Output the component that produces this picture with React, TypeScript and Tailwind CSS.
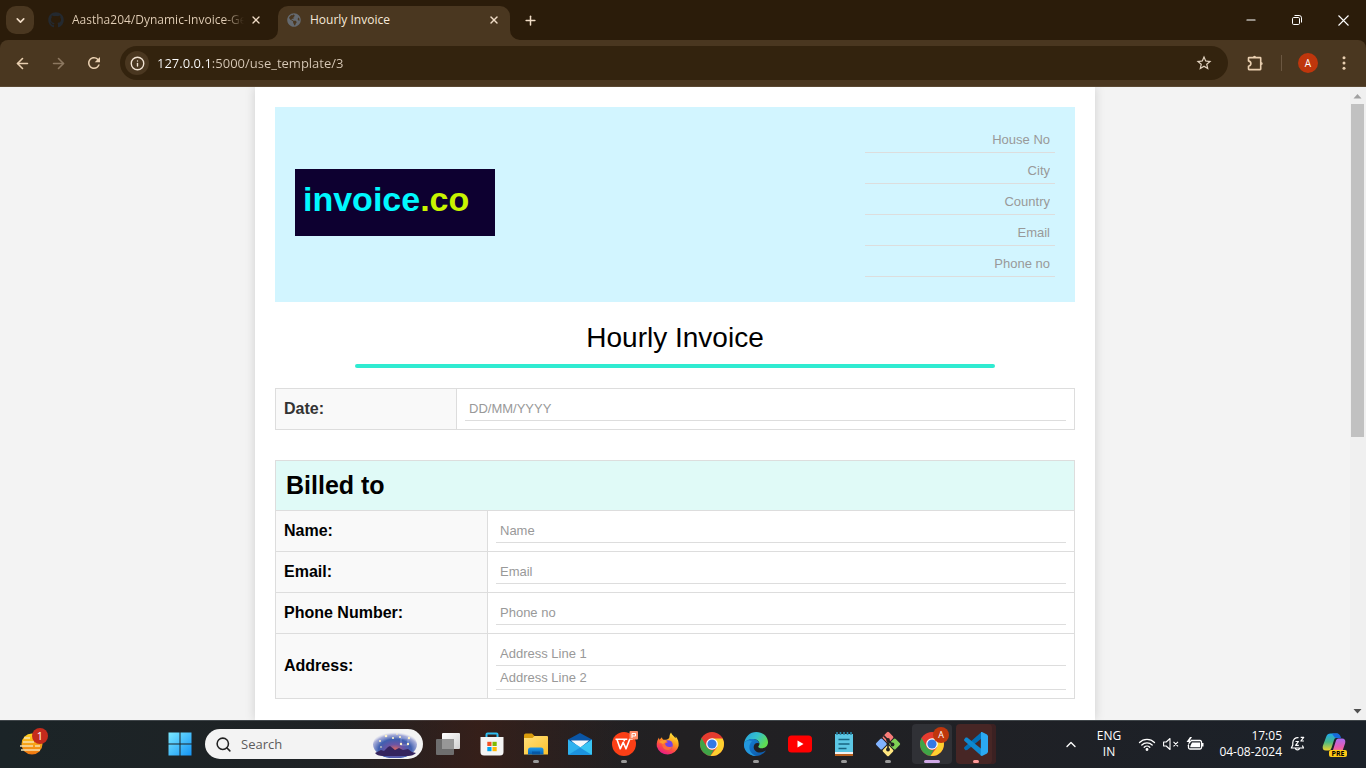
import React from "react";
import type { ReactNode } from "react";
import { ArrowLeft, ArrowRight, ChevronDown, ChevronUp, Info, Minus, Plus, Search, X } from "lucide-react";
import { FaGithub, FaGlobeAmericas } from "react-icons/fa";
import { MdRefresh, MdStarBorder } from "react-icons/md";

const UI_FONT = "font-['Open_Sans','Noto_Sans',sans-serif]";

function Flare({ side }: { side: "left" | "right" }) {
  return (
    <svg
      aria-hidden="true"
      viewBox="0 0 10 10"
      className={side === "left" ? "absolute -left-[10px] bottom-0 size-[10px]" : "absolute -right-[10px] bottom-0 size-[10px] -scale-x-100"}
    >
      <path d="M10 0v10H0A10 10 0 0 0 10 0Z" fill="#4a3720" />
    </svg>
  );
}

function TitleBar() {
  return (
    <header className="flex h-10 shrink-0 items-stretch bg-[#2b1c0a] text-[#f0dcc6]">
      <button aria-label="Search tabs" className="mt-[6px] ml-[6px] flex size-7 shrink-0 items-center justify-center rounded-[10px] bg-[#4a3720]">
        <ChevronDown size={13} strokeWidth={3} />
      </button>
      <div className="mt-[6px] ml-[14px] flex h-7 w-[216px] shrink-0 items-center">
        <FaGithub size={16} color="#24292f" className="shrink-0" />
        <span className="ml-2 w-44 shrink-0 bg-linear-to-r from-[#e4d0b8] from-[152px] to-transparent to-[172px] bg-clip-text text-[12px] leading-4 whitespace-nowrap text-transparent">
          Aastha204/Dynamic-Invoice-Ge
        </span>
        <button aria-label="Close tab" className="flex size-4 shrink-0 items-center justify-center">
          <X size={12} strokeWidth={2.6} />
        </button>
      </div>
      <div className="relative mt-[6px] ml-[14px] flex w-[232px] shrink-0 items-center rounded-t-[10px] bg-[#4a3720] pr-2 pb-[6px] pl-[9px]">
        <Flare side="left" />
        <Flare side="right" />
        <FaGlobeAmericas size={14} color="#656a70" />
        <span className="ml-[9px] text-[12px] leading-4 text-[#f7e9d8]">Hourly Invoice</span>
        <button aria-label="Close tab" className="ml-auto flex size-4 items-center justify-center">
          <X size={12} strokeWidth={2.8} />
        </button>
      </div>
      <button aria-label="New tab" className="ml-[6px] flex w-7 items-center justify-center">
        <Plus size={15} strokeWidth={2.4} />
      </button>
      <div className="ml-auto flex text-white">
        <button aria-label="Minimise" className="flex w-[46px] items-center justify-center">
          <Minus size={14} strokeWidth={1.8} />
        </button>
        <button aria-label="Restore" className="flex w-[46px] items-center justify-center">
          <svg width="10" height="10" viewBox="0 0 10 10" fill="none" stroke="currentColor">
            <rect x=".5" y="2.5" width="7" height="7" rx="1.2" />
            <path d="M2.5 .5h4.600a2.400 2.400 0 0 1 2.400 2.400v4.600" />
          </svg>
        </button>
        <button aria-label="Close" className="flex w-[46px] items-center justify-center">
          <svg width="11" height="11" viewBox="0 0 11 11" stroke="currentColor" strokeWidth="1.1">
            <path d="M.5.5l10 10M10.500.5l-10 10" />
          </svg>
        </button>
      </div>
    </header>
  );
}

function Toolbar() {
  return (
    <div className="bg-[#2b1c0a]">
      <nav aria-label="Browser" className="flex h-[47px] items-center rounded-t-[8px] border-b border-[#5a4832] bg-[#4a3720] pl-2 text-[#e9cfb0]">
        <div className="flex gap-2">
          <button aria-label="Back" className="flex size-7 items-center justify-center"><ArrowLeft size={17} strokeWidth={2.3} /></button>
          <button aria-label="Forward" className="flex size-7 items-center justify-center text-[#8d7860]"><ArrowRight size={17} strokeWidth={2.3} /></button>
          <button aria-label="Reload" className="flex size-7 items-center justify-center"><MdRefresh size={18} /></button>
        </div>
        <div className="ml-3 flex h-[34px] min-w-0 flex-1 items-center rounded-full bg-[#33230e] px-[5px]">
          <button aria-label="Site information" className="flex size-6 shrink-0 items-center justify-center rounded-full bg-[#4a3720] text-[#f0e2d2]">
            <Info size={15} strokeWidth={2.2} />
          </button>
          <input
            aria-label="Address"
            defaultValue="127.0.0.1:5000/use_template/3"
            className="ml-2 min-w-0 flex-1 bg-linear-to-r from-white from-[54px] to-[#d9cab8] to-[54px] bg-clip-text text-[13px] leading-5 text-transparent outline-none"
          />
          <button aria-label="Bookmark" className="mr-[10px] flex size-[18px] shrink-0 items-center justify-center text-[#e3d3c0]">
            <MdStarBorder size={18} />
          </button>
        </div>
        <button aria-label="Extensions" className="ml-[17px] flex size-5 items-center justify-center">
          <svg width="18" height="18" viewBox="0 0 18 18" fill="none" stroke="currentColor" strokeWidth="1.600" strokeLinejoin="round">
            <path d="M3 3.600h11.200q.5 0 .5.500v11q0 .5-.5.500H3q-.5 0-.5-.5v-2.800q2.400-.5 2.400-2.700T2.500 6.900V4.100q0-.5.5-.5Z" />
            <path d="M7 3.200a1.500 1.500 0 0 1 3 0ZM15.100 7.900a1.600 1.600 0 0 1 0 3.200Z" fill="currentColor" stroke="none" />
          </svg>
        </button>
        <span className="ml-4 h-4 w-px bg-[#6b5741]" />
        <button aria-label="Profile" className="ml-4 flex size-5 items-center justify-center rounded-full bg-[#bf360c] text-[10px] leading-4 text-white">A</button>
        <button aria-label="Menu" className="mr-3 ml-4 flex size-5 items-center justify-center">
          <svg width="4" height="16" viewBox="0 0 4 16" fill="currentColor">
            <circle cx="2" cy="2.800" r="1.500" /><circle cx="2" cy="8" r="1.500" /><circle cx="2" cy="13.200" r="1.500" />
          </svg>
        </button>
      </nav>
    </div>
  );
}

const FIELD = "block w-full border-b border-[#ddd] text-[13px] leading-[15px] text-black outline-none placeholder:text-[#999]";

function HeaderField({ name }: { name: string }) {
  return <input aria-label={name} placeholder={name} className={`${FIELD} bg-transparent p-[5px] text-right`} />;
}

function Row({ label, fields, className }: { label: string; fields: string[]; className: string }) {
  const id = label.toLowerCase().replace(/\W+/g, "-");
  return (
    <tr className="border border-[#ddd]">
      <th scope="row" className={`${className} border border-[#ddd] bg-[#f9f9f9] p-2 text-left text-[16px] leading-[18px] font-bold`}>
        <label htmlFor={id}>{label}</label>
      </th>
      <td className="border border-[#ddd] p-2">
        {fields.map((f, i) => (
          <input key={f} id={i === 0 ? id : undefined} aria-label={i === 0 ? undefined : f} placeholder={f} className={`${FIELD} bg-white p-1`} />
        ))}
      </td>
    </tr>
  );
}

function InvoicePage() {
  return (
    <main className="mx-auto min-h-full w-full max-w-[840px] bg-white p-5 font-['Liberation_Sans',Arial,sans-serif] shadow-[0_0_10px_rgba(0,0,0,0.15)]">
      <section className="flex items-center justify-between bg-[#d2f5ff] p-5">
        <div className="pb-1">
          <div className="h-[67px] w-[200px] bg-[#0d0030] pt-[13px] pl-2 text-[34px] leading-[34px] font-bold text-[#00f8ff]">
            invoice<span className="text-[#c8f400]">.co</span>
          </div>
        </div>
        <div className="flex w-[190px] flex-col gap-[5px] pb-[5px]">
          {["House No", "City", "Country", "Email", "Phone no"].map((n) => <HeaderField key={n} name={n} />)}
        </div>
      </section>
      <h1 className="mt-5 text-center text-[28px] leading-8 text-black">Hourly Invoice</h1>
      <div className="mx-auto mt-[10px] mb-5 h-1 w-4/5 rounded-full bg-[#2febd1]" />
      <table className="mb-[30px] w-full table-fixed border-collapse">
        <tbody>
          <Row label="Date:" fields={["DD/MM/YYYY"]} className="w-[181px] text-[#333]" />
        </tbody>
      </table>
      <table className="w-full table-fixed border-collapse">
        <colgroup>
          <col className="w-[212px]" />
          <col />
        </colgroup>
        <thead>
          <tr>
            <th colSpan={2} className="border border-[#ddd] bg-[#e0faf7] p-[10px] text-left text-[25px] leading-[29px] font-bold text-black">Billed to</th>
          </tr>
        </thead>
        <tbody>
          <Row label="Name:" fields={["Name"]} className="text-black" />
          <Row label="Email:" fields={["Email"]} className="text-black" />
          <Row label="Phone Number:" fields={["Phone no"]} className="text-black" />
          <Row label="Address:" fields={["Address Line 1", "Address Line 2"]} className="text-black" />
        </tbody>
      </table>
    </main>
  );
}

function Scrollbar() {
  return (
    <div aria-hidden="true" className="flex w-4 shrink-0 flex-col items-center bg-[#f0f0f0] pr-[2px]">
      <svg className="h-[17px] w-[9px] shrink-0" viewBox="0 0 9 17" fill="#a0a0a0"><path d="M.5 11.500l4-4.500 4 4.500Z" /></svg>
      <div className="h-[333px] w-[13px] bg-[#c1c1c1]" />
      <svg className="mt-auto h-[17px] w-[9px] shrink-0" viewBox="0 0 9 17" fill="#505050"><path d="M.5 6l4 4.500 4-4.500Z" /></svg>
    </div>
  );
}

function ChromeLogo({ id }: { id: string }) {
  return (
    <svg width="24" height="24" viewBox="0 0 24 24">
      <defs><clipPath id={id}><circle cx="12" cy="12" r="12" /></clipPath></defs>
      <g clipPath={`url(#${id})`}>
        <rect width="24" height="24" fill="#e53b2f" />
        <path d="M1.600 6L6.800 15a6 6 0 0 0 7.200 2.700L10.400 24H0V6Z" fill="#3fa447" />
        <path d="M12 6.500h12V24H10.400L17.200 15Z" fill="#fdd02f" />
      </g>
      <circle cx="12" cy="12" r="5.800" fill="#fff" />
      <circle cx="12" cy="12" r="4.600" fill="#3478e5" />
    </svg>
  );
}

function TaskViewIcon() {
  return (
    <svg width="24" height="24" viewBox="0 0 24 24">
      <defs><linearGradient id="tv" x2="1" y2="1"><stop stopColor="#fff" /><stop offset="1" stopColor="#d0d0d0" /></linearGradient></defs>
      <rect x="6" y="1" width="18" height="16" rx="1" fill="url(#tv)" />
      <rect x="0" y="7" width="18" height="16" rx="1" fill="#6e6e6e" />
      <rect x="6" y="7" width="12" height="10" fill="#979797" />
    </svg>
  );
}

function StoreIcon() {
  return (
    <svg width="24" height="24" viewBox="0 0 24 24">
      <path d="M6.500 6V2.500a1 1 0 0 1 1-1h9a1 1 0 0 1 1 1V6" fill="none" stroke="#2ebdf0" strokeWidth="2" />
      <path d="M.5 5h23v15a3.500 3.500 0 0 1-3.500 3.500H4A3.500 3.500 0 0 1 .5 20Z" fill="#f4f4f4" />
      <path d="M7.300 9.800h4.200V14H7.300Z" fill="#f25022" /><path d="M12.500 9.800h4.200V14h-4.200Z" fill="#7fba00" />
      <path d="M7.300 15h4.200v4.200H7.300Z" fill="#00a4ef" /><path d="M12.500 15h4.200v4.200h-4.200Z" fill="#ffb900" />
    </svg>
  );
}

function FolderIcon() {
  return (
    <svg width="24" height="24" viewBox="0 0 24 24">
      <defs>
        <linearGradient id="fd" x2="1" y2="1"><stop stopColor="#ffe07a" /><stop offset="1" stopColor="#fdc12c" /></linearGradient>
        <linearGradient id="fb" y2="1" x2="0"><stop stopColor="#1f9bea" /><stop offset="1" stopColor="#0560b4" /></linearGradient>
      </defs>
      <path d="M0 3.200A1.700 1.700 0 0 1 1.700 1.500H8L10.500 4H22v4H0Z" fill="#d99b0b" />
      <path d="M0 6h8.500L10.500 4H23a1 1 0 0 1 1 1v17.500H0Z" fill="url(#fd)" />
      <path d="M4 22.500V18a2.500 2.500 0 0 1 2.500-2.500h10.500a2.500 2.500 0 0 1 2.500 2.500v4.500Z" fill="url(#fb)" />
      <path d="M8 19.500h8v3H8Z" fill="#0658a6" />
    </svg>
  );
}

function MailIcon() {
  return (
    <svg width="24" height="24" viewBox="0 0 24 24">
      <path d="M0 7.500L12 1l12 6.500V13H0Z" fill="#0a55a5" />
      <path d="M3 8.500h18L12 16Z" fill="#f5f8fb" />
      <path d="M0 7.500L13 15.500 23 23H1a1 1 0 0 1-1-1Z" fill="#2fb1ee" />
      <path d="M24 7.500L12 15.500 1 23h22a1 1 0 0 0 1-1Z" fill="#39c5f4" />
      <path d="M12 15.500L23.500 22.800l-.5.200H1l-.5-.2Z" fill="#1c93df" />
    </svg>
  );
}

function WpsIcon() {
  return (
    <svg width="26" height="26" viewBox="0 0 26 26" className="overflow-visible">
      <circle cx="13" cy="13" r="12" fill="#fb3f16" />
      <path d="M4.500 8.200h9.300l-.8 2M6 8.500l3.200 9.300 3-6.500 2.800 6.500 3.700-9.600h3M13.800 8.200h2.500" fill="none" stroke="#fff" strokeWidth="1.600" strokeLinejoin="round" />
      <rect x="18.500" y="0" width="8.500" height="8.500" rx="1" fill="#ff8a65" />
      <path d="M21 7V2.500h3.500v2.500h-3.500" fill="none" stroke="#fff" />
    </svg>
  );
}

function FirefoxIcon() {
  return (
    <svg width="24" height="24" viewBox="0 0 24 24">
      <defs>
        <linearGradient id="ff" x1=".8" y1="0" x2=".3" y2="1"><stop stopColor="#fff23f" /><stop offset=".4" stopColor="#ffa01c" /><stop offset=".7" stopColor="#ff4a45" /><stop offset="1" stopColor="#e5178d" /></linearGradient>
      </defs>
      <path d="M15 .5c1 2.500 3 3.800 4.500 5.700.3-.6.200-1.400.1-2 2.500 2.800 3.400 6.200 3 9.800A11.300 11.300 0 0 1 .8 14.500C.3 10.800 1.600 7.500 3 5.500c0 1 .2 1.700.5 2.200C4.300 6.600 5 6 6 5.200c0 1.200.5 2 1.500 2.500h2.600c2.300-.2 3.500-1.700 3.400-3.700.1-1.200.6-2.200 1.500-3.500Z" fill="url(#ff)" />
      <circle cx="12" cy="13" r="4.800" fill="#7542e5" />
      <path d="M6.500 10c2-1.500 4-1 5.500.2-1 .2-1.700 1-3 1.300.4 3.500 4.500 4.500 7.300 2.700-1 3.800-5.300 5-8 2.800-2-1.700-2.600-4.600-1.800-7Z" fill="#ff6a3a" />
      <path d="M3 10c3-2 5-2 8-1L7 12Z" fill="#ff9b2b" />
    </svg>
  );
}

function EdgeIcon() {
  return (
    <svg width="24" height="24" viewBox="0 0 24 24">
      <defs>
        <linearGradient id="eg" x2="1" y2=".5"><stop stopColor="#249ee5" /><stop offset=".55" stopColor="#35c1c9" /><stop offset="1" stopColor="#5fdc51" /></linearGradient>
        <linearGradient id="eb" x2="1" y2="1"><stop stopColor="#1682d5" /><stop offset="1" stopColor="#0d57a8" /></linearGradient>
      </defs>
      <path d="M0 12C1 4.500 6 0 12.300 0 19 0 24 4.500 24 10.300c0 3.500-2.700 6-6.200 6-2.800 0-4.300-1.100-3.200-2.300C17 11 14 7 9 7 4.500 7 1 9.500 0 12Z" fill="url(#eg)" />
      <path d="M0 12c1-3.300 4.500-5 8.500-5 3.500 0 6.500 2 6.600 4.500-2.500-1.500-5.700.5-5.400 4 .3 4.500 6.300 7 12.300 3A12 12 0 0 1 0 12Z" fill="url(#eb)" />
      <path d="M8 9.500c-4 3-4 11 4 14.500C4 24-.5 18 0 12 1 8.500 5 7.500 8 9.500Z" fill="#2397dd" />
    </svg>
  );
}

function YoutubeIcon() {
  return (
    <svg width="24" height="18" viewBox="0 0 24 18">
      <rect width="24" height="17" y=".5" rx="3.500" fill="#f00" /><path d="M9.500 5.500v7l6-3.500Z" fill="#fff" />
    </svg>
  );
}

function NotepadIcon() {
  return (
    <svg width="20" height="24" viewBox="0 0 20 24">
      <path d="M1 20h18v4H1Z" fill="#b9601e" /><path d="M1 19h18v3H1Z" fill="#f1f1f1" />
      <path d="M1 2h18v18H1Z" fill="#5cc7e4" />
      <path d="M3 0v3M6.500 0v3M10 0v3M13.500 0v3M17 0v3" stroke="#2a86a5" strokeWidth="1.600" />
      <path d="M4.500 7.500h11M4.500 12h11M4.500 16.500h8" stroke="#176480" strokeWidth="1.400" />
    </svg>
  );
}

function GitIcon() {
  return (
    <svg width="26" height="26" viewBox="0 0 26 26">
      <g transform="rotate(45 13 13)">
        <rect x="4" y="4" width="8.500" height="8.500" rx="1.500" fill="#f87c79" />
        <rect x="13.500" y="4" width="8.500" height="8.500" rx="1.500" fill="#7fcf55" />
        <rect x="4" y="13.500" width="8.500" height="8.500" rx="1.500" fill="#80b3ff" />
        <rect x="13.500" y="13.500" width="8.500" height="8.500" rx="1.500" fill="#ffe680" />
      </g>
      <path d="M8.500 4.500l9 9M13 9v10" stroke="#222" strokeWidth="1.600" />
      <circle cx="13" cy="9" r="1.900" fill="#222" /><circle cx="17.500" cy="13.500" r="1.900" fill="#222" /><circle cx="13" cy="18.500" r="1.900" fill="#222" />
    </svg>
  );
}

function VsCodeIcon() {
  return (
    <svg width="24" height="24" viewBox="0 0 24 24">
      <path d="M17.500 0v6.500L3.200 18 1.500 18.300.2 16.700v-1.400L17.500 0Z" fill="#0070b8" />
      <path d="M.2 7.200l1.500-1.700L3.200 5.600 17.500 17v7L.2 8.700Z" fill="#0f88d0" />
      <path d="M17 0l1 .1 5 2.400 1 1.500v16l-1 1.500-5 2.400-1.300-.3Z" fill="#2ba9f3" />
    </svg>
  );
}

function AppButton({ name, children, mark, active }: { name: string; children: ReactNode; mark?: string; active?: string }) {
  return (
    <button aria-label={name} className={`relative flex size-10 shrink-0 items-center justify-center rounded ${active ?? ""}`}>
      {children}
      {mark && <span className={`absolute bottom-px h-[3px] rounded-full ${mark}`} />}
    </button>
  );
}

function WeatherIcon() {
  return (
    <svg width="24" height="22" viewBox="0 0 24 22">
      <defs><linearGradient id="we" x2="0" y2="1"><stop stopColor="#ffd321" /><stop offset="1" stopColor="#ee7410" /></linearGradient></defs>
      <circle cx="12" cy="11" r="10.500" fill="url(#we)" />
      <path d="M4 5h6M3 9h11M16 9h7M0 13h13M15 13h5M1 17h19" stroke="#f6dfaa" strokeWidth="1.700" />
    </svg>
  );
}

function SearchArt() {
  return (
    <svg width="44" height="28" viewBox="0 0 44 28">
      <defs>
        <radialGradient id="sk" cx=".5" cy=".68" r=".62"><stop stopColor="#e0675f" /><stop offset=".3" stopColor="#6a55a5" /><stop offset=".6" stopColor="#3f5fb0" /><stop offset=".85" stopColor="#8e96cf" stopOpacity=".75" /><stop offset="1" stopColor="#c6cbe8" stopOpacity="0" /></radialGradient>
      </defs>
      <ellipse cx="22" cy="14.500" rx="22" ry="14" fill="url(#sk)" />
      <path d="M2 23l6-3 3 1 4-4 2-1 5 4 4-2 4 2 5-1 4 3 4 1q-3 3-8 3H10q-6 0-8-3Z" fill="#34245e" />
      <path d="M28 8l8 0M28 8v7h7V8" fill="none" stroke="#b9c3f5" strokeWidth=".4" />
      <g fill="#fff3c9"><circle cx="7" cy="11" r="1" /><circle cx="13" cy="6" r="1.300" /><circle cx="20" cy="8" r="1.100" /><circle cx="27" cy="7" r="1.100" /><circle cx="36" cy="8" r="1.200" /><circle cx="35" cy="14" r="1.200" /><circle cx="28" cy="14" r="1.200" /><circle cx="8" cy="17" r=".8" /><circle cx="24" cy="4" r=".8" /></g>
    </svg>
  );
}

function CopilotIcon() {
  return (
    <svg width="24" height="24" viewBox="0 0 24 24">
      <defs>
        <linearGradient id="ca" x2="0" y2="1"><stop stopColor="#1da7ee" /><stop offset=".5" stopColor="#48b886" /><stop offset="1" stopColor="#eed32b" /></linearGradient>
        <linearGradient id="cb" x2="0" y2="1"><stop stopColor="#a86cf0" /><stop offset=".6" stopColor="#e95bb0" /><stop offset="1" stopColor="#fa8c63" /></linearGradient>
      </defs>
      <path d="M8.500 1.500H15q2 0 3 4.500h-4q-1.500 0-2 2l-2.500 8q-.8 2.500-3 2.500H4Q0 18.500.8 14L4.300 4.500q1-3 4.200-3Z" fill="url(#ca)" />
      <path d="M10 1.500h5q3 0 4 4.500h-4.500q-2 0-3-2.200Z" fill="#1769dc" />
      <path d="M16.500 6.500H20q4 0 3.200 4.500L20.800 18q-1 3-4 3H8q2.200-.4 3-3l3-9.500q.6-2 2.500-2Z" fill="url(#cb)" />
    </svg>
  );
}

function Taskbar() {
  return (
    <footer className="flex h-12 shrink-0 items-stretch bg-linear-to-r from-[#1b2427] via-[#222022] to-[#1b2129] text-white shadow-[inset_0_1px_0_#40464a]">
      <div className="flex w-40 shrink-0 items-center pl-5">
        <button aria-label="Weather, 1 alert" className="relative flex">
          <WeatherIcon />
          <span className="absolute -top-[5px] left-[12px] flex size-4 items-center justify-center rounded-full bg-[#c42b1c] text-[11px] leading-4">1</span>
        </button>
      </div>
      <div className="flex shrink-0 items-center bg-linear-to-r from-transparent from-20% via-[#4a1d1080] via-38% to-transparent to-56%">
        <div className="flex items-center">
          <AppButton name="Start">
            <svg width="24" height="24" viewBox="0 0 24 24">
              <defs><linearGradient id="win" x2="1" y2="1"><stop stopColor="#7be9ff" /><stop offset="1" stopColor="#1494f5" /></linearGradient></defs>
              <path d="M.5.5h11v11H.5ZM12.500.5h11v11h-11ZM.5 12.500h11v11H.5ZM12.500 12.500h11v11h-11Z" fill="url(#win)" />
            </svg>
          </AppButton>
          <label className="ml-[5px] flex h-[30px] w-[218px] items-center rounded-full bg-[#f3f3f3] pr-[6px] pl-[10px]">
            <Search size={17} strokeWidth={2.2} color="#222" className="shrink-0" />
            <input aria-label="Search" placeholder="Search" className="ml-[9px] w-0 min-w-0 flex-1 bg-transparent text-[13px] leading-5 text-black outline-none placeholder:text-[#5c5c5c]" />
            <SearchArt />
          </label>
        </div>
        <div className="ml-[5px] flex gap-1">
          <AppButton name="Task view"><TaskViewIcon /></AppButton>
          <AppButton name="Store"><StoreIcon /></AppButton>
          <AppButton name="File Explorer" mark="w-[6px] bg-[#9a9a9a]"><FolderIcon /></AppButton>
          <AppButton name="Mail"><MailIcon /></AppButton>
          <AppButton name="WPS Office" mark="w-[6px] bg-[#9a9a9a]"><WpsIcon /></AppButton>
          <AppButton name="Firefox"><FirefoxIcon /></AppButton>
          <AppButton name="Chrome"><ChromeLogo id="chrome-a" /></AppButton>
          <AppButton name="Edge" mark="w-[6px] bg-[#9a9a9a]"><EdgeIcon /></AppButton>
          <AppButton name="YouTube"><YoutubeIcon /></AppButton>
          <AppButton name="Notepad" mark="w-[6px] bg-[#9a9a9a]"><NotepadIcon /></AppButton>
          <AppButton name="Git" mark="w-[6px] bg-[#9a9a9a]"><GitIcon /></AppButton>
          <AppButton name="Chrome, profile A" mark="w-4 bg-[#cfa8e6]" active="bg-[#303136]">
            <ChromeLogo id="chrome-b" />
            <span className="absolute top-[3px] right-[3px] flex size-4 items-center justify-center rounded-full bg-[#bf360c] text-[9px] leading-4">A</span>
          </AppButton>
          <AppButton name="Visual Studio Code" mark="w-[6px] bg-[#ff9a9a]" active="bg-[#472625] shadow-[inset_-4px_0_0_#3b2122]"><VsCodeIcon /></AppButton>
        </div>
      </div>
      <div className="ml-auto flex shrink-0 items-center text-[12px] leading-4">
        <button aria-label="Hidden icons" className="flex w-4 justify-center"><ChevronUp size={17} strokeWidth={2} /></button>
        <button className="ml-[14px] w-8 text-center">ENG<br />IN</button>
        <button aria-label="Network, sound and battery" className="ml-[13px] flex items-center gap-[7px]">
          <svg width="18" height="14" viewBox="0 0 18 14" fill="none" stroke="#fff" strokeWidth="1.300" strokeLinecap="round">
            <path d="M1.500 5.500a10.500 10.500 0 0 1 15 0M3.800 8a7.300 7.300 0 0 1 10.400 0M6.200 10.300a4 4 0 0 1 5.600 0" /><circle cx="9" cy="12.500" r=".8" fill="#fff" />
          </svg>
          <svg width="16" height="14" viewBox="0 0 16 14" fill="none" stroke="#fff" strokeWidth="1.100" strokeLinejoin="round">
            <path d="M.6 5h2.600L7 1.500v11L3.200 9H.6ZM10.500 4.800l4.500 4.500M15 4.800l-4.500 4.500" />
          </svg>
          <svg width="18" height="14" viewBox="0 0 18 14">
            <path d="M5 3.500h9a1.500 1.500 0 0 1 1.500 1.500v5.500A1.500 1.500 0 0 1 14 12H4a1.500 1.500 0 0 1-1.500-1.500V8" fill="none" stroke="#fff" strokeWidth="1.300" />
            <path d="M6 5.500h8v4.800H4.300V9Z" fill="#fff" /><path d="M16 6h1.500v3.500H16Z" fill="#fff" /><path d="M4 0L.5 5H3L1.500 9 6 3.500H3.800L6 0Z" fill="#fff" />
          </svg>
        </button>
        <button className="ml-2 w-[70px] text-right whitespace-nowrap">17:05<br />04-08-2024</button>
        <button aria-label="Notifications" className="ml-2 flex">
          <svg width="16" height="16" viewBox="0 0 16 16" fill="none" stroke="#fff" strokeWidth="1.200" strokeLinejoin="round">
            <path d="M8.500 1.600a5 5 0 0 0-5.700 4.900V9L1.300 12h12.200L12.400 9.500M5.300 12.200a2.200 2.200 0 0 0 4.300 0" /><path d="M5.500 5.500h3L5.600 9.300h3.200M10.700 1.300h3L10.900 5h3" />
          </svg>
        </button>
        <button aria-label="Copilot preview" className="relative mr-5 ml-4 flex">
          <CopilotIcon />
          <span className="absolute -right-px -bottom-px flex h-[7px] w-[18px] items-center justify-center rounded-[2px] bg-[#ffc916] text-[7px] leading-[7px] font-bold text-black">PRE</span>
        </button>
      </div>
    </footer>
  );
}

export default function App() {
  return (
    <div className={`flex h-screen flex-col overflow-hidden ${UI_FONT}`}>
      <TitleBar />
      <Toolbar />
      <div className="flex min-h-0 flex-1 bg-[#f3f3f3]">
        <div className="min-w-0 flex-1 overflow-hidden">
          <InvoicePage />
        </div>
        <Scrollbar />
      </div>
      <Taskbar />
    </div>
  );
}
